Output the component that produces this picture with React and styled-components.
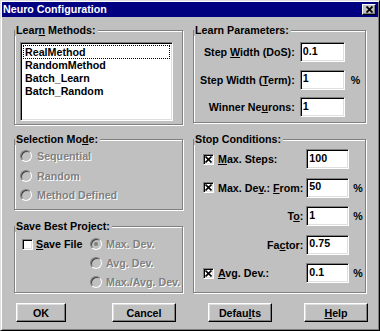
import React from 'react'
import styled, { createGlobalStyle } from 'styled-components'

const GlobalStyle = createGlobalStyle`
  html, body {
    margin: 0;
    padding: 0;
    background: #c0c0c0;
  }
  body {
    font-family: "Liberation Sans", Arial, sans-serif;
    font-size: 10.7px;
    font-weight: bold;
    color: #000;
  }
  u {
    text-decoration-thickness: 1px;
    text-underline-offset: 1px;
  }
`

const Window = styled.div`
  width: 380px;
  height: 331px;
  box-sizing: border-box;
  background: #c0c0c0;
  border: 1px solid;
  border-color: #dfdfdf #000 #000 #dfdfdf;
  box-shadow: inset 1px 1px 0 #fff, inset -1px -1px 0 #808080;
  padding: 1px;
  display: flex;
  flex-direction: column;
`

const TitleBar = styled.div`
  height: 15px;
  background: #000080;
  color: #fff;
  display: flex;
  align-items: center;
  justify-content: space-between;
  padding: 0 2px 0 1px;
  line-height: 15px;
`

const CloseButton = styled.div`
  width: 14px;
  height: 11px;
  box-sizing: border-box;
  background: #c0c0c0;
  border: 1px solid;
  border-color: #fff #000 #000 #fff;
  box-shadow: inset -1px -1px 0 #808080;
  display: flex;
  align-items: center;
  justify-content: center;
`

const Body = styled.div`
  display: grid;
  grid-template-columns: 169px 173px;
  column-gap: 10px;
  padding: 13px 0 0 12px;
`

const Column = styled.div`
  display: flex;
  flex-direction: column;
  gap: ${p => p.$gap}px;
`

const Group = styled.div`
  position: relative;
  box-sizing: border-box;
  height: ${p => p.$h}px;
  border: 1px solid #808080;
  box-shadow: 1px 1px 0 #fff, inset 1px 1px 0 #fff;
  padding: ${p => p.$pad};
`

const Legend = styled.span`
  position: absolute;
  top: -7px;
  left: 0;
  background: #c0c0c0;
  padding: 0 2px 0 1px;
  line-height: 12px;
  white-space: nowrap;
`

const ListBox = styled.div`
  width: 153px;
  height: 79px;
  box-sizing: border-box;
  background: #fff;
  border: 1px solid;
  border-color: #808080 #fff #fff #808080;
  box-shadow: inset 1px 1px 0 #000, inset -1px -1px 0 #dfdfdf;
  padding: 2px 2px;
`

const ListItem = styled.div`
  line-height: 12px;
  padding-left: 1px;
  border: 1px dotted ${p => (p.$focus ? '#000' : 'transparent')};
  margin-top: ${p => (p.$focus ? '0' : '-1px')};
  margin-bottom: ${p => (p.$focus ? '0' : '-1px')};
`

const OptionList = styled.div`
  display: flex;
  flex-direction: column;
  gap: ${p => p.$gap}px;
`

const OptionRow = styled.div`
  display: flex;
  align-items: center;
  gap: ${p => p.$gap || 5}px;
  height: 16px;
  white-space: nowrap;
  color: ${p => (p.$disabled ? '#808080' : '#000')};
  text-shadow: ${p => (p.$disabled ? '1px 1px 0 #fff' : 'none')};
`

const Radio = styled.span`
  width: 12px;
  height: 12px;
  box-sizing: border-box;
  border-radius: 50%;
  border: 1px solid;
  border-color: #808080 #fff #fff #808080;
  box-shadow: inset 1px 1px 0 #404040;
  background: #c0c0c0;
  display: flex;
  align-items: center;
  justify-content: center;
  flex-shrink: 0;
  &::after {
    content: '';
    width: 4px;
    height: 4px;
    border-radius: 50%;
    background: ${p => (p.$checked ? '#808080' : 'transparent')};
  }
`

const CheckBox = styled.span`
  width: 11px;
  height: 11px;
  box-sizing: border-box;
  background: #fff;
  border: 1px solid;
  border-color: #808080 #fff #fff #808080;
  box-shadow: inset 1px 1px 0 #000, inset -1px -1px 0 #dfdfdf;
  display: flex;
  align-items: center;
  justify-content: center;
  flex-shrink: 0;
`

const SaveLayout = styled.div`
  display: grid;
  grid-template-columns: 68px auto;
`

const FieldGrid = styled.div`
  display: grid;
  grid-template-columns: 1fr ${p => p.$inputW}px 10px;
  grid-auto-rows: 20px;
  column-gap: ${p => p.$colGap}px;
  row-gap: ${p => p.$rowGap}px;
  align-items: center;
`

const FieldLabel = styled.div`
  white-space: nowrap;
  display: flex;
  align-items: center;
  justify-content: ${p => (p.$left ? 'flex-start' : 'flex-end')};
  gap: 4px;
`

const EditBox = styled.input`
  width: 100%;
  height: 20px;
  box-sizing: border-box;
  background: #fff;
  border: 1px solid;
  border-color: #808080 #fff #fff #808080;
  box-shadow: inset 1px 1px 0 #000, inset -1px -1px 0 #dfdfdf;
  padding: 0 2px 3px 2px;
  margin: 0;
  font: inherit;
  color: #000;
  outline: none;
`

const Unit = styled.span`
  padding-left: 1px;
`

const ButtonRow = styled.div`
  display: grid;
  grid-template-columns: repeat(4, 96px);
  padding: 10px 0 0 14px;
`

const Button = styled.button`
  width: ${p => p.$w}px;
  height: 19px;
  box-sizing: border-box;
  background: #c0c0c0;
  border: 1px solid;
  border-color: #fff #000 #000 #fff;
  box-shadow: inset -1px -1px 0 #808080, inset 1px 1px 0 #dfdfdf;
  font: inherit;
  color: #000;
  padding: 0;
`

const XMark = ({ size = 7, stroke = 1.6 }) => (
  <svg width={size} height={size} viewBox="0 0 7 7">
    <path d="M0.5 0.5 L6.5 6.5 M6.5 0.5 L0.5 6.5" stroke="#000" strokeWidth={stroke} />
  </svg>
)

const learnMethods = ['RealMethod', 'RandomMethod', 'Batch_Learn', 'Batch_Random']

export default function App () {
  return (
    <>
      <GlobalStyle />
      <Window>
        <TitleBar>
          <span>Neuro Configuration</span>
          <CloseButton><XMark size={7} stroke={1.8} /></CloseButton>
        </TitleBar>

        <Body>
          <Column $gap={14}>
            <Group $h={95} $pad="11px 0 0 5px">
              <Legend>Lear<u>n</u> Methods:</Legend>
              <ListBox>
                {learnMethods.map((m, i) => (
                  <ListItem key={m} $focus={i === 0}>{m}</ListItem>
                ))}
              </ListBox>
            </Group>

            <Group $h={71} $pad="8px 0 0 5px" style={{ marginBottom: 2 }}>
              <Legend>Selection Mo<u>d</u>e:</Legend>
              <OptionList $gap={3.5}>
                <OptionRow $disabled><Radio />Sequential</OptionRow>
                <OptionRow $disabled><Radio />Random</OptionRow>
                <OptionRow $disabled><Radio />Method Defined</OptionRow>
              </OptionList>
            </Group>

            <Group $h={67} $pad="9px 0 0 7px">
              <Legend>Save Best Project:</Legend>
              <SaveLayout>
                <OptionRow $gap={3}>
                  <CheckBox />
                  <span><u>S</u>ave File</span>
                </OptionRow>
                <OptionList $gap={3}>
                  <OptionRow $disabled $gap={4}><Radio $checked /><span>Max. Dev.</span></OptionRow>
                  <OptionRow $disabled $gap={4}><Radio /><span>Avg. Dev.</span></OptionRow>
                  <OptionRow $disabled $gap={4}><Radio /><span>Max./Avg. Dev.</span></OptionRow>
                </OptionList>
              </SaveLayout>
            </Group>
          </Column>

          <Column $gap={16}>
            <Group $h={93} $pad="11px 6px 0 6px">
              <Legend>Learn Parameters:</Legend>
              <FieldGrid $inputW={45} $colGap={5} $rowGap={7.5}>
                <FieldLabel><span>Step <u>W</u>idth (DoS):</span></FieldLabel>
                <EditBox readOnly value="0.1" />
                <span />
                <FieldLabel><span>Step Width (<u>T</u>erm):</span></FieldLabel>
                <EditBox readOnly value="1" />
                <Unit>%</Unit>
                <FieldLabel><span>Winner Ne<u>u</u>rons:</span></FieldLabel>
                <EditBox readOnly value="1" />
                <span />
              </FieldGrid>
            </Group>

            <Group $h={154} $pad="9px 6px 0 9px">
              <Legend>Stop Conditions:</Legend>
              <FieldGrid $inputW={43} $colGap={3} $rowGap={8.5}>
                <FieldLabel $left><CheckBox><XMark /></CheckBox><span><u>M</u>ax. Steps:</span></FieldLabel>
                <EditBox readOnly value="100" />
                <span />
                <FieldLabel $left><CheckBox><XMark /></CheckBox><span>Max. De<u>v</u>.: <u>F</u>rom:</span></FieldLabel>
                <EditBox readOnly value="50" />
                <Unit>%</Unit>
                <FieldLabel><span>T<u>o</u>:</span></FieldLabel>
                <EditBox readOnly value="1" />
                <Unit>%</Unit>
                <FieldLabel><span>Fa<u>c</u>tor:</span></FieldLabel>
                <EditBox readOnly value="0.75" />
                <span />
                <FieldLabel $left><CheckBox><XMark /></CheckBox><span><u>A</u>vg. Dev.:</span></FieldLabel>
                <EditBox readOnly value="0.1" />
                <Unit>%</Unit>
              </FieldGrid>
            </Group>
          </Column>
        </Body>

        <ButtonRow>
          <Button $w={50}>OK</Button>
          <Button $w={64}>Cancel</Button>
          <Button $w={64}>Defau<u>l</u>ts</Button>
          <Button $w={64}><u>H</u>elp</Button>
        </ButtonRow>
      </Window>
    </>
  )
}
